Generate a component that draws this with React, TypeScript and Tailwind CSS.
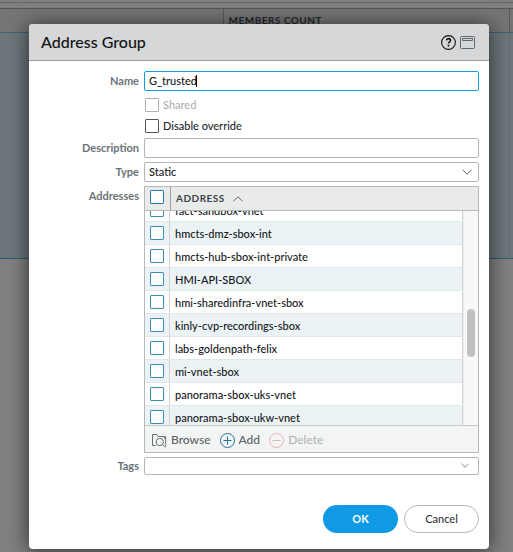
import { useState } from "react";

const addresses = [
  "fact-sandbox-vnet",
  "hmcts-dmz-sbox-int",
  "hmcts-hub-sbox-int-private",
  "HMI-API-SBOX",
  "hmi-sharedinfra-vnet-sbox",
  "kinly-cvp-recordings-sbox",
  "labs-goldenpath-felix",
  "mi-vnet-sbox",
  "panorama-sbox-uks-vnet",
  "panorama-sbox-ukw-vnet",
];

const label = "w-[115px] shrink-0 pr-[5px] text-right text-[11px] font-bold text-[#6b7378]";
const field = "w-full rounded-xs border border-[#b3b6b9] bg-white text-[11px] font-medium text-[#16191c] outline-none";
const tick = "block size-[14px] shrink-0 appearance-none rounded-[1px] border bg-white";

function Chevron({ className }: { className: string }) {
  return (
    <svg className={className} viewBox="0 0 10 6" fill="none" stroke="#5f6468" aria-hidden="true">
      <path d="M.5.7 5 5.2 9.5.7" />
    </svg>
  );
}

export default function App() {
  const [name, setName] = useState("G_trusted");

  return (
    <div className="relative min-h-screen overflow-hidden bg-[#808080] font-[Lato,sans-serif]">
      <div className="h-[3px] border-b border-[#656565]" />
      <div className="h-[5px]" />
      <table className="w-full table-fixed border-collapse">
        <colgroup>
          <col className="w-[223px]" />
          <col />
          <col className="w-1" />
        </colgroup>
        <thead>
          <tr className="h-6 border-t border-b border-t-[#555555] border-b-[#3f6075] bg-[#757575]">
            <th className="border-r border-[#56595b] p-0" />
            <th className="border-r border-[#56595b] p-0 pb-[2px] pl-[5px] text-left text-[10px] leading-4 font-bold tracking-wider text-[#24282b]">
              MEMBERS COUNT
            </th>
            <th className="p-0" />
          </tr>
        </thead>
        <tbody>
          <tr className="h-[226px] border-b border-[#2c5a75] bg-[#6d777b]">
            <td />
            <td className="border-r border-[#686d70]" />
            <td />
          </tr>
        </tbody>
      </table>

      <div className="absolute inset-0 pt-6 pr-6 pb-[3px] pl-[29px]">
        <div
          role="dialog"
          aria-labelledby="dialog-title"
          className="overflow-hidden rounded-[4px] bg-white shadow-[0_2px_20px_1px_rgba(0,0,0,0.6)]"
        >
          <header className="flex h-[37px] items-center border-b border-[#999da0] bg-[#d6d7d9] pr-[14px] pl-3">
            <h1 id="dialog-title" className="flex-1 text-[16px] font-medium text-[#111315]">
              Address Group
            </h1>
            <button type="button" aria-label="Help" className="mr-1">
              <svg className="size-[15px]" viewBox="0 0 15 15" fill="none" stroke="#111315" aria-hidden="true">
                <circle cx="7.5" cy="7.5" r="6.9" strokeWidth="1.1" />
                <path d="M5.5 5.4c.1-1.2.9-1.8 2-1.8s2 .7 2 1.7c0 1.5-2 1.5-2 3.3" strokeWidth="1.6" />
                <path d="M7.5 9.8v1.6" strokeWidth="1.7" />
              </svg>
            </button>
            <button type="button" aria-label="Collapse">
              <svg className="h-[13px] w-[15px]" viewBox="0 0 15 13" fill="none" stroke="#62666a" aria-hidden="true">
                <rect x=".5" y=".5" width="14" height="12" rx="1" />
                <path d="M2.5 2.5h10v2h-10z" />
              </svg>
            </button>
          </header>

          <form className="pt-[10px] pr-[10px] pb-4" onSubmit={(e) => e.preventDefault()}>
            <div className="flex items-center">
              <label htmlFor="name" className={label}>Name</label>
              <div className="relative flex-1">
                <input
                  id="name"
                  value={name}
                  onChange={(e) => setName(e.target.value)}
                  className="block h-5 w-full rounded-xs border border-[#119be0] bg-white px-1 pb-[2px] text-[11px] font-medium text-[#16191c] outline-none"
                />
                <span className="absolute top-1 left-[52px] h-3 w-px bg-black" />
              </div>
            </div>

            <div className="mt-[7px] ml-[116px] flex flex-col gap-[7px] text-[11px] leading-[14px] font-medium">
              <label className="flex items-center gap-1 text-[#adb0b3]">
                <input type="checkbox" disabled className={`${tick} border-[#adb0b3]`} />
                Shared
              </label>
              <label className="flex items-center gap-1 text-[#25292d]">
                <input type="checkbox" className={`${tick} border-[#4e565c]`} />
                Disable override
              </label>
            </div>

            <div className="mt-[5px] flex items-center">
              <label htmlFor="description" className={label}>Description</label>
              <input id="description" className={`${field} h-5 px-1`} />
            </div>

            <div className="mt-1 flex items-center">
              <label htmlFor="type" className={label}>Type</label>
              <div className="relative flex-1">
                <select id="type" className={`${field} block h-5 appearance-none px-1`}>
                  <option>Static</option>
                </select>
                <Chevron className="pointer-events-none absolute top-[7px] right-[7px] h-[6px] w-[10px]" />
              </div>
            </div>

            <div className="mt-1 flex items-start">
              <span className={`${label} pt-[2px]`}>Addresses</span>
              <div className="min-w-0 flex-1 border border-[#b5b9bc]">
                <div className="flex h-6 items-center border-b border-[#b5b9bc] bg-[#e9eaea]">
                  <div className="flex h-full w-[26px] shrink-0 items-center border-r border-[#9a9fa3] pb-[3px] pl-[5px]">
                    <input type="checkbox" aria-label="Select all" className={`${tick} border-[#2b7fae]`} />
                  </div>
                  <button type="button" className="flex items-center gap-2 pl-[5px] text-[10px] font-bold tracking-wider text-[#3d454b]">
                    ADDRESS
                    <Chevron className="h-[6px] w-[10px] rotate-180" />
                  </button>
                </div>
                <div className="flex h-[214px] overflow-hidden">
                  <table className="-mt-3 h-[230px] flex-1 table-fixed border-separate border-spacing-0">
                    <colgroup>
                      <col className="w-[25px]" />
                      <col />
                    </colgroup>
                    <tbody>
                      {addresses.map((address, i) => (
                        <tr key={address} className={i % 2 ? "bg-[#ebf3f6]" : "bg-white"}>
                          <td className="h-[23px] border-r border-b border-r-[#d0d4d6] border-b-[#e3e6e7] p-0 pl-[5px]">
                            <input type="checkbox" aria-label={address} className={`${tick} border-[#3c8cb8]`} />
                          </td>
                          <td className="h-[23px] border-r border-b border-r-[#d0d4d6] border-b-[#e3e6e7] p-0 pt-[2px] pl-[5px] text-[11px] leading-4 font-medium text-[#16191c]">
                            {address}
                          </td>
                        </tr>
                      ))}
                    </tbody>
                  </table>
                  <div className="w-[15px] shrink-0 border-l border-[#ececec] bg-[#f8f8f8] pt-[98px] pl-[3px]">
                    <div className="h-12 w-2 rounded-full bg-[#c1c1c1]" />
                  </div>
                </div>
                <div className="flex h-[27px] items-center gap-[9px] border-t border-[#c5c9cb] bg-[#f3f5f5] pt-[2px] pl-[7px] text-[12px] font-medium text-[#5d6367]">
                  <button type="button" className="flex items-center gap-1">
                    <svg className="size-[15px]" viewBox="0 0 15 15" fill="none" stroke="#697075" aria-hidden="true">
                      <path d="M3.5 12.5h-3v-11h4.3l1.3 2h6.4v2M12.5 3.5h1.2v10" />
                      <circle cx="7.8" cy="9" r="3.7" />
                      <path d="m10.5 11.6 2.8 2.9" />
                    </svg>
                    Browse
                  </button>
                  <button type="button" className="flex items-center gap-1">
                    <svg className="size-[15px]" viewBox="0 0 15 15" fill="none" stroke="#20709e" aria-hidden="true">
                      <circle cx="7.5" cy="7.5" r="7" />
                      <path d="M3.5 7.5h8M7.5 3.5v8" />
                    </svg>
                    Add
                  </button>
                  <button type="button" disabled className="flex items-center gap-1 text-[#b2b5b7]">
                    <svg className="size-[15px]" viewBox="0 0 15 15" fill="none" stroke="#e6b5b3" aria-hidden="true">
                      <circle cx="7.5" cy="7.5" r="7" />
                      <path d="M3.5 7.5h8" />
                    </svg>
                    Delete
                  </button>
                </div>
              </div>
            </div>

            <div className="mt-1 flex items-center">
              <label htmlFor="tags" className={label}>Tags</label>
              <div className="relative flex-1">
                <select id="tags" className={`${field} block h-[18px] appearance-none px-1`}>
                  <option />
                </select>
                <Chevron className="pointer-events-none absolute top-[6px] right-[10px] h-[5px] w-2" />
              </div>
            </div>

            <div className="mt-[30px] flex justify-end gap-[6px] text-[11px]">
              <button type="submit" className="h-7 w-[75px] rounded-full bg-[#1099e5] font-bold text-white">
                OK
              </button>
              <button type="button" className="h-7 w-[75px] rounded-full border border-[#b5b9bc] bg-white font-medium text-[#30363a]">
                Cancel
              </button>
            </div>
          </form>
        </div>
      </div>
    </div>
  );
}
